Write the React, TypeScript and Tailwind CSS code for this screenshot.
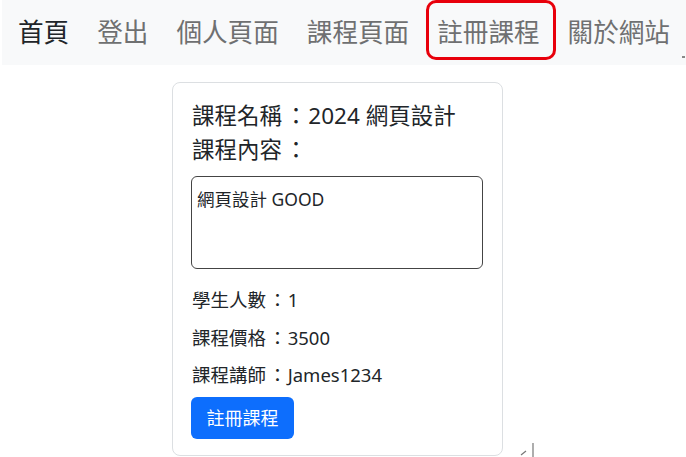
import React from "react";

const font = {
  fontFamily: '"Segoe UI", "Noto Sans", "Noto Sans CJK TC", sans-serif',
};

function C() {
  return <span className="inline-block pl-[0.12em] pr-[0.05em]">：</span>;
}

export default function App() {
  const links = ["登出", "個人頁面", "課程頁面", "註冊課程", "關於網站"];
  return (
    <div lang="zh-Hant" className="relative w-[686px] h-[457px] overflow-hidden bg-white text-[#212529]" style={font}>
      <nav className="ml-[2px] h-[65px] bg-[#f8f9fa] flex items-center pl-[16px] gap-[28px] text-[25.6px] leading-none">
        <span className="text-[#212529]">首頁</span>
        {links.map((l) => (
          <span key={l} className="text-[#6f7071]">
            {l}
          </span>
        ))}
      </nav>
      <div className="pl-[172px] pt-[17px]">
        <div className="w-[331px] h-[374px] border border-[#dcdfe2] rounded-[8px] px-[18px] pt-[15px] pb-[16px] flex flex-col">
          <div className="h-[35px] flex items-center text-[22.5px] pl-[1px] whitespace-pre">
            <span>課程名稱<C />2024 網頁設計</span>
          </div>
          <div className="h-[35px] flex items-center text-[22.5px] pl-[1px]">
            <span>課程內容<C /></span>
          </div>
          <div className="mt-[8px] w-[292px] h-[93px] border border-[#444] rounded-[6px] px-[5px] pt-[11px] text-[17.5px] leading-[22px]">
            網頁設計 GOOD
          </div>
          <div className="mt-[13px] flex flex-col text-[18.5px] pl-[1px]">
            <div className="h-[37.5px] flex items-center"><span>學生人數<C />1</span></div>
            <div className="h-[37.5px] flex items-center"><span>課程價格<C />3500</span></div>
            <div className="h-[37.5px] flex items-center"><span>課程講師<C />James1234</span></div>
          </div>
          <button className="mt-[3px] w-[103px] h-[42px] rounded-[6px] bg-[#0d6efd] text-white text-[18px] flex items-center justify-center">
            註冊課程
          </button>
        </div>
      </div>
      <div className="absolute left-[426px] top-[0px] w-[130px] h-[60px] border-[3px] border-[#e8000b] rounded-[10px]" />
      <div className="absolute left-[682px] top-[56px] w-[3px] h-[2px] bg-[#888]" />
      <svg className="absolute left-[518px] top-[443px]" width="20" height="14" viewBox="0 0 20 14">
        <path d="M3 12 L8 8" stroke="#777" strokeWidth="1.2" fill="none" />
        <path d="M15 0 L15 14" stroke="#777" strokeWidth="1.2" fill="none" />
      </svg>
    </div>
  );
}
